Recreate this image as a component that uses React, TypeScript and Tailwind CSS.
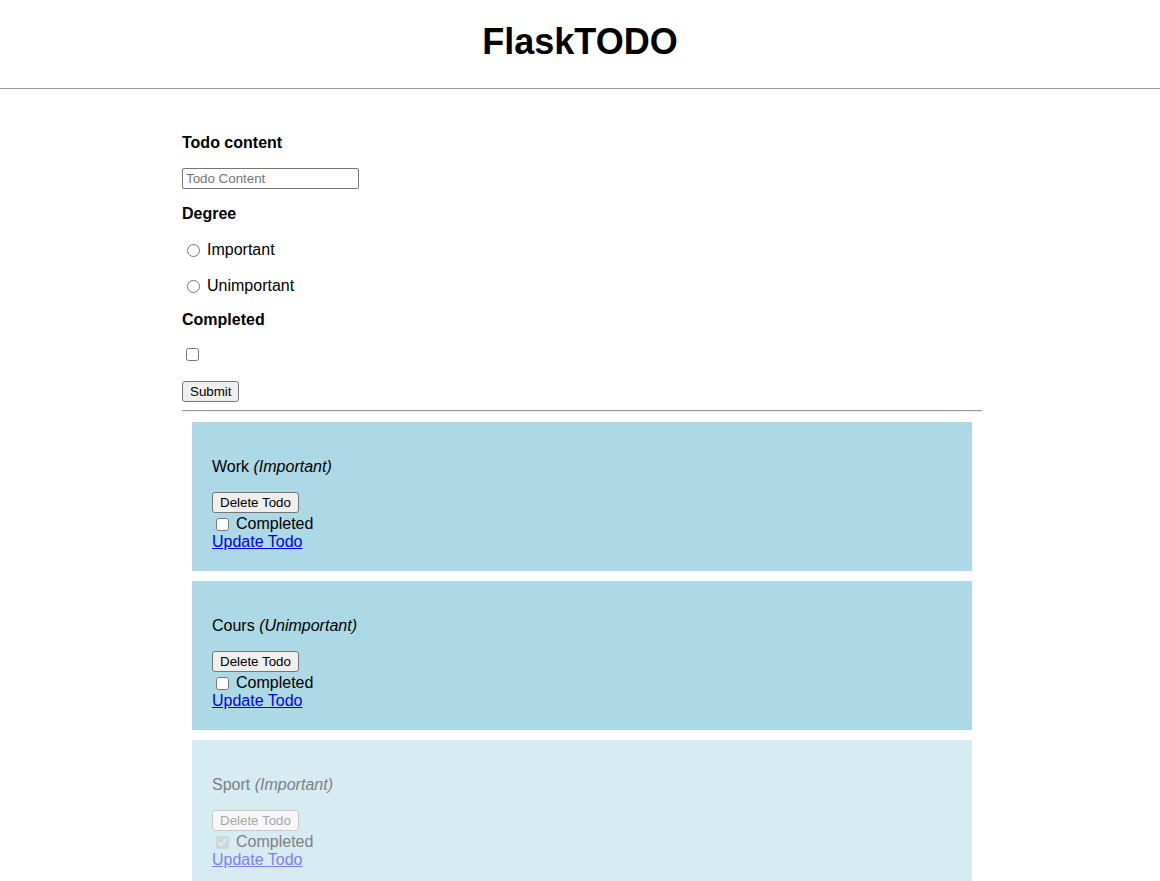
import React from "react";

type Todo = {
  content: string;
  degree: string;
  completed: boolean;
};

const todos: Todo[] = [
  { content: "Work", degree: "Important", completed: false },
  { content: "Cours", degree: "Unimportant", completed: false },
  { content: "Sport", degree: "Important", completed: true },
];

const btn =
  "border rounded-[3px] px-[7px] h-[21px] text-[13.33px] leading-[17px]";

const TodoCard: React.FC<{ todo: Todo }> = ({ todo }) => {
  const done = todo.completed;
  return (
    <div
      className={`mx-[10px] mb-[10px] px-[20px] pt-[36px] pb-[20px] ${
        done ? "bg-[#d6ebf2] text-[#808080]" : "bg-[#add8e6] text-black"
      }`}
    >
      <p className="text-[16px] leading-[18px]">
        {todo.content} <i>({todo.degree})</i>
      </p>
      <div className="mt-[16px] flex flex-col items-start">
        <button
          className={`${btn} ${
            done
              ? "bg-[#f7f7f7] border-[#c8c8c8] text-[#a8a8a8]"
              : "bg-[#efefef] border-[#767676] text-black"
          }`}
          disabled={done}
        >
          Delete Todo
        </button>
        <label className="mt-[2px] flex items-center text-[16px] leading-[18px]">
          <input
            type="checkbox"
            className={`ml-[4px] mr-[7px] mt-[1px] w-[13px] h-[13px] ${done ? "opacity-60" : ""}`}
            defaultChecked={done}
            disabled={done}
          />
          Completed
        </label>
        <a
          href="#"
          className={`underline text-[16px] leading-[18px] ${
            done ? "text-[#8080f6]" : "text-[#0000ee]"
          }`}
        >
          Update Todo
        </a>
      </div>
    </div>
  );
};

const App: React.FC = () => {
  return (
    <div className="min-h-screen bg-white text-black font-['Liberation_Sans',Arial,sans-serif]">
      <div className="h-[88px] pt-[21px] text-center">
        <h1 className="text-[36px] leading-[41px] font-bold">FlaskTODO</h1>
      </div>
      <div className="h-px bg-[#9a9a9a]" />

      <div className="ml-[182px] w-[800px]">
        <form className="flex flex-col items-start pt-[45px]">
          <label className="font-bold text-[16px] leading-[18px]">Todo content</label>
          <input
            type="text"
            placeholder="Todo Content"
            className="mt-[16px] w-[177px] h-[21px] border border-[#767676] rounded-[2px] px-[3px] text-[13.33px] placeholder:text-[#757575]"
          />
          <div className="mt-[16px] font-bold text-[16px] leading-[18px]">Degree</div>
          <label className="mt-[18px] flex items-center text-[16px] leading-[18px]">
            <input type="radio" name="degree" className="ml-[5px] mr-[7px] w-[13px] h-[13px]" />
            Important
          </label>
          <label className="mt-[18px] flex items-center text-[16px] leading-[18px]">
            <input type="radio" name="degree" className="ml-[5px] mr-[7px] w-[13px] h-[13px]" />
            Unimportant
          </label>
          <div className="mt-[16px] font-bold text-[16px] leading-[18px]">Completed</div>
          <input type="checkbox" className="mt-[19px] ml-[4px] w-[13px] h-[13px]" />
          <button type="button" className={`${btn} mt-[20px] bg-[#efefef] border-[#767676] text-black`}>
            Submit
          </button>
        </form>
        <div className="mt-[8px] h-[2px] border-t border-[#9a9a9a] bg-[#eeeeee]" />
        <div className="pt-[10px]">
          {todos.map((todo) => (
            <TodoCard key={todo.content} todo={todo} />
          ))}
        </div>
      </div>
    </div>
  );
};

export default App;
